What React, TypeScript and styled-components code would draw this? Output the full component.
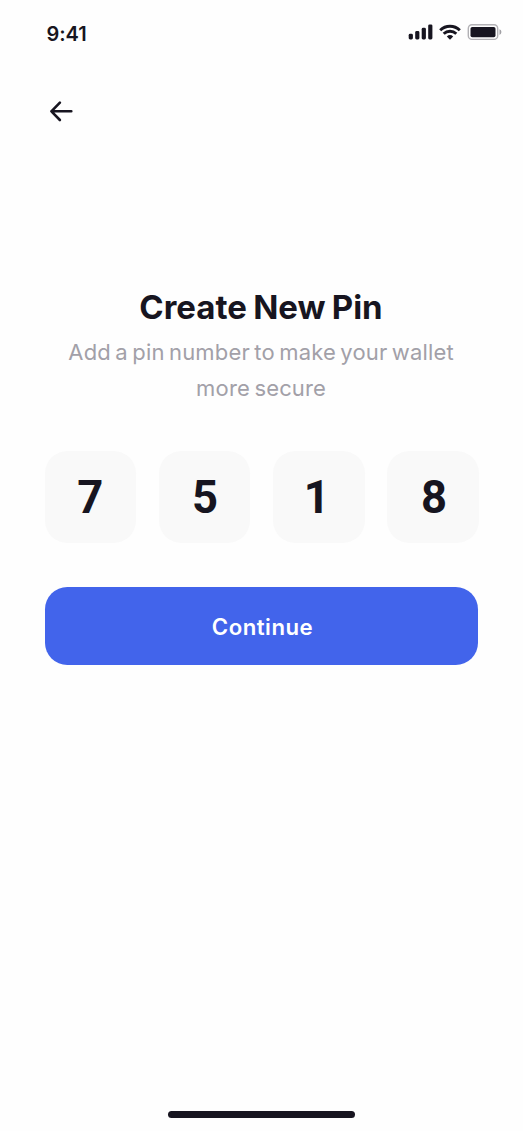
import React from "react";
import styled, { createGlobalStyle } from "styled-components";

const ink = "#171520";

const GlobalStyle = createGlobalStyle`
  * { box-sizing: border-box; }
  body { margin: 0; background: #fefefe; }
`;

const Screen = styled.main`
  display: flex;
  flex-direction: column;
  width: 523px;
  height: 1131px;
  overflow: hidden;
  background: #fefefe;
  color: ${ink};
  font-family: Inter, "Liberation Sans", sans-serif;
`;

const StatusBar = styled.header`
  display: flex;
  justify-content: space-between;
  height: 61px;
  padding: 22px 21px 0 46.6px;
`;

const Time = styled.time`
  font-size: 20px;
  line-height: 24px;
  font-weight: 600;
  letter-spacing: -0.1px;
`;

const StatusIcons = styled.svg`
  display: block;
  width: 95px;
  height: 20px;
`;

const NavBar = styled.nav`
  display: flex;
  align-items: center;
  height: 100px;
  padding: 0 44.6px;
`;

const BackButton = styled.button`
  display: flex;
  padding: 0;
  border: 0;
  background: none;
  color: inherit;

  svg {
    width: 34px;
    height: 34px;
  }
`;

const Content = styled.section`
  display: flex;
  flex-direction: column;
  padding: 123px 44.6px 0;
`;

const Title = styled.h1`
  margin: 0;
  padding-right: 1px;
  font-size: 33px;
  line-height: 46px;
  font-weight: 700;
  letter-spacing: 0;
  word-spacing: -1.6px;
  text-align: center;
  white-space: nowrap;
`;

const Subtitle = styled.p`
  margin: 4px 0 0;
  padding-right: 0.8px;
  color: #a2a0a8;
  font-size: 22px;
  line-height: 36px;
  letter-spacing: 0.16px;
  word-spacing: -1.9px;
  text-align: center;
  white-space: nowrap;
`;

const PinRow = styled.div`
  display: flex;
  gap: 22.6px;
  margin-top: 45px;
`;

const PinCell = styled.div<{ $shift: number }>`
  display: flex;
  flex: none;
  align-items: center;
  justify-content: center;
  width: 91.6px;
  height: 91.6px;
  padding-top: 2px;
  border-radius: 22.3px;
  background: #f9f9f9;
  font-family: Roboto, Inter, sans-serif;
  font-size: 45.4px;
  line-height: 1;
  font-weight: 700;
  text-indent: ${({ $shift }) => $shift * 2}px;
`;

const ContinueButton = styled.button`
  height: 78px;
  margin-top: 44.6px;
  padding: 1px 0 0 2px;
  border: 0;
  border-radius: 22.3px;
  background: #4264eb;
  color: #fff;
  font-family: inherit;
  font-size: 22.2px;
  font-weight: 600;
  letter-spacing: 0.5px;
`;

const HomeIndicator = styled.div`
  width: 187px;
  height: 7px;
  margin: auto auto 13px;
  border-radius: 4px;
  background: ${ink};
`;

const pin = [
  { digit: "7", shift: 0 },
  { digit: "5", shift: 0.5 },
  { digit: "1", shift: -2 },
  { digit: "8", shift: 1 },
];

export default function App() {
  return (
    <Screen>
      <GlobalStyle />
      <StatusBar>
        <Time>9:41</Time>
        <StatusIcons viewBox="0 0 95 20" fill={ink}>
          <rect x="1.7" y="11.8" width="4.2" height="5.7" rx="1.4" />
          <rect x="8.2" y="9" width="4.2" height="8.5" rx="1.4" />
          <rect x="14.7" y="5.8" width="4.2" height="11.7" rx="1.4" />
          <rect x="21.2" y="2.4" width="4.2" height="15.1" rx="1.4" />
          <g fill="none" stroke={ink} strokeWidth="2.9">
            <path d="M33.2 8.2a14 14 0 0 1 19.6 0" />
            <path d="M36.7 11.8a9 9 0 0 1 12.6 0" />
          </g>
          <path d="M39.8 14.6a4.7 4.7 0 0 1 6.4 0L43 17.7Z" />
          <rect x="61.3" y="2.8" width="29.4" height="14.6" rx="3.6" fill="none" stroke={ink} strokeOpacity="0.33" strokeWidth="1.4" />
          <rect x="63.5" y="5" width="25" height="10.2" rx="1.8" />
          <path d="M92.5 7.3v5.6a3 3 0 0 0 0-5.6Z" fillOpacity="0.4" />
        </StatusIcons>
      </StatusBar>
      <NavBar>
        <BackButton aria-label="Back">
          <svg viewBox="0 0 34 34" fill="none" stroke={ink} strokeWidth="2.6" strokeLinecap="round" strokeLinejoin="round">
            <path d="M26.3 17.3H6.4M14.9 8.6l-8.5 8.7 8.5 8.7" />
          </svg>
        </BackButton>
      </NavBar>
      <Content>
        <Title>Create New Pin</Title>
        <Subtitle>
          Add a pin number to make your wallet
          <br />
          more secure
        </Subtitle>
        <PinRow>
          {pin.map(({ digit, shift }) => (
            <PinCell key={digit} $shift={shift}>
              {digit}
            </PinCell>
          ))}
        </PinRow>
        <ContinueButton>Continue</ContinueButton>
      </Content>
      <HomeIndicator />
    </Screen>
  );
}
